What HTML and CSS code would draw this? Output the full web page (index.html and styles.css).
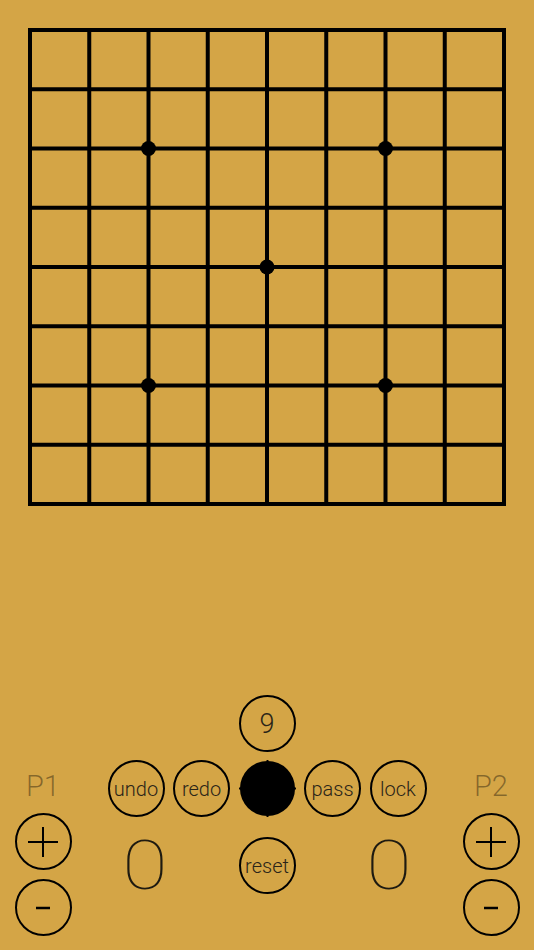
FILE: index.html
```html
<!DOCTYPE html>
<html>
<head>
<meta charset="utf-8">
<link rel="stylesheet" href="styles.css">
</head>
<body>
<div class="page">
  <svg class="board" width="534" height="534" viewBox="0 0 534 534">
    <g stroke="#000" stroke-width="4" fill="none">
      <rect x="30" y="30" width="474" height="474"/>
      <line x1="89.25" y1="30" x2="89.25" y2="504"/>
      <line x1="148.5" y1="30" x2="148.5" y2="504"/>
      <line x1="207.75" y1="30" x2="207.75" y2="504"/>
      <line x1="267" y1="30" x2="267" y2="504"/>
      <line x1="326.25" y1="30" x2="326.25" y2="504"/>
      <line x1="385.5" y1="30" x2="385.5" y2="504"/>
      <line x1="444.75" y1="30" x2="444.75" y2="504"/>
      <line y1="89.25" x1="30" y2="89.25" x2="504"/>
      <line y1="148.5" x1="30" y2="148.5" x2="504"/>
      <line y1="207.75" x1="30" y2="207.75" x2="504"/>
      <line y1="267" x1="30" y2="267" x2="504"/>
      <line y1="326.25" x1="30" y2="326.25" x2="504"/>
      <line y1="385.5" x1="30" y2="385.5" x2="504"/>
      <line y1="444.75" x1="30" y2="444.75" x2="504"/>
    </g>
    <g fill="#000">
      <circle cx="148.5" cy="148.5" r="7.5"/>
      <circle cx="385.5" cy="148.5" r="7.5"/>
      <circle cx="267" cy="267" r="7.5"/>
      <circle cx="148.5" cy="385.5" r="7.5"/>
      <circle cx="385.5" cy="385.5" r="7.5"/>
    </g>
  </svg>

  <div class="controls">
    <div class="side">
      <div class="player">P1</div>
      <div class="btn icon-btn" aria-label="+">
        <svg width="30" height="30" viewBox="0 0 30 30"><path d="M0 15H30M15 0V30" stroke="#000" stroke-width="2"/></svg>
      </div>
      <div class="btn icon-btn minus" aria-label="-">
        <svg width="14" height="4" viewBox="0 0 14 4"><path d="M0 2H14" stroke="#000" stroke-width="2.5"/></svg>
      </div>
    </div>

    <div class="center">
      <div class="btn size">9</div>
      <div class="row">
        <div class="btn">undo</div>
        <div class="btn">redo</div>
        <div class="stone" aria-label="turn">
          <svg width="59" height="59" viewBox="0 0 59 59">
            <circle cx="29.5" cy="29.5" r="28.5" fill="#000"/>
            <rect x="28.5" y="0" width="2" height="3" fill="#000"/>
            <rect x="28.5" y="56" width="2" height="3" fill="#000"/>
            <rect x="0" y="28.5" width="3" height="2" fill="#000"/>
            <rect x="56" y="28.5" width="3" height="2" fill="#000"/>
          </svg>
        </div>
        <div class="btn">pass</div>
        <div class="btn">lock</div>
      </div>
      <div class="row bottom">
        <div class="cell"><span class="score">0</span></div>
        <div class="cell"><div class="btn">reset</div></div>
        <div class="cell"><span class="score">0</span></div>
      </div>
    </div>

    <div class="side">
      <div class="player">P2</div>
      <div class="btn icon-btn" aria-label="+">
        <svg width="30" height="30" viewBox="0 0 30 30"><path d="M0 15H30M15 0V30" stroke="#000" stroke-width="2"/></svg>
      </div>
      <div class="btn icon-btn minus" aria-label="-">
        <svg width="14" height="4" viewBox="0 0 14 4"><path d="M0 2H14" stroke="#000" stroke-width="2.5"/></svg>
      </div>
    </div>
  </div>
</div>
</body>
</html>
```

FILE: styles.css
```css
html, body {
  margin: 0;
  padding: 0;
  background: #d4a546;
}

.page {
  width: 534px;
  height: 950px;
  display: flex;
  flex-direction: column;
  font-family: Roboto, "Liberation Sans", sans-serif;
  color: #2a2418;
}

.board {
  display: block;
  flex: none;
}

.controls {
  margin-top: 161px;
  height: 241px;
  display: flex;
  justify-content: space-between;
}

.side {
  width: 86px;
  display: flex;
  flex-direction: column;
  align-items: center;
  justify-content: flex-end;
  gap: 9px;
}

.player {
  font-size: 29px;
  font-weight: 300;
  line-height: 30px;
  height: 30px;
  color: rgba(0, 0, 0, 0.38);
  margin-bottom: 3px;
}

.btn {
  box-sizing: border-box;
  width: 57px;
  height: 57px;
  border: 2.6px solid #000;
  border-radius: 50%;
  display: flex;
  align-items: center;
  justify-content: center;
  font-size: 20px;
  font-weight: 300;
  flex: none;
}

.icon-btn svg {
  display: block;
}

.center {
  width: 362px;
  display: flex;
  flex-direction: column;
  align-items: center;
}

.size {
  font-size: 27px;
}

.row {
  margin-top: 8px;
  display: flex;
  align-items: center;
  gap: 8.5px;
}

.stone {
  width: 57px;
  height: 57px;
  display: flex;
  align-items: center;
  justify-content: center;
  flex: none;
}

.stone svg {
  display: block;
}

.bottom {
  margin-top: 20px;
  gap: 0;
}

.cell {
  width: 122px;
  height: 57px;
  display: flex;
  align-items: center;
  justify-content: center;
}

.score {
  display: inline-block;
  font-size: 69px;
  font-weight: 100;
  line-height: 57px;
  color: #1e1a10;
  transform: scaleX(1.2);
}
```
